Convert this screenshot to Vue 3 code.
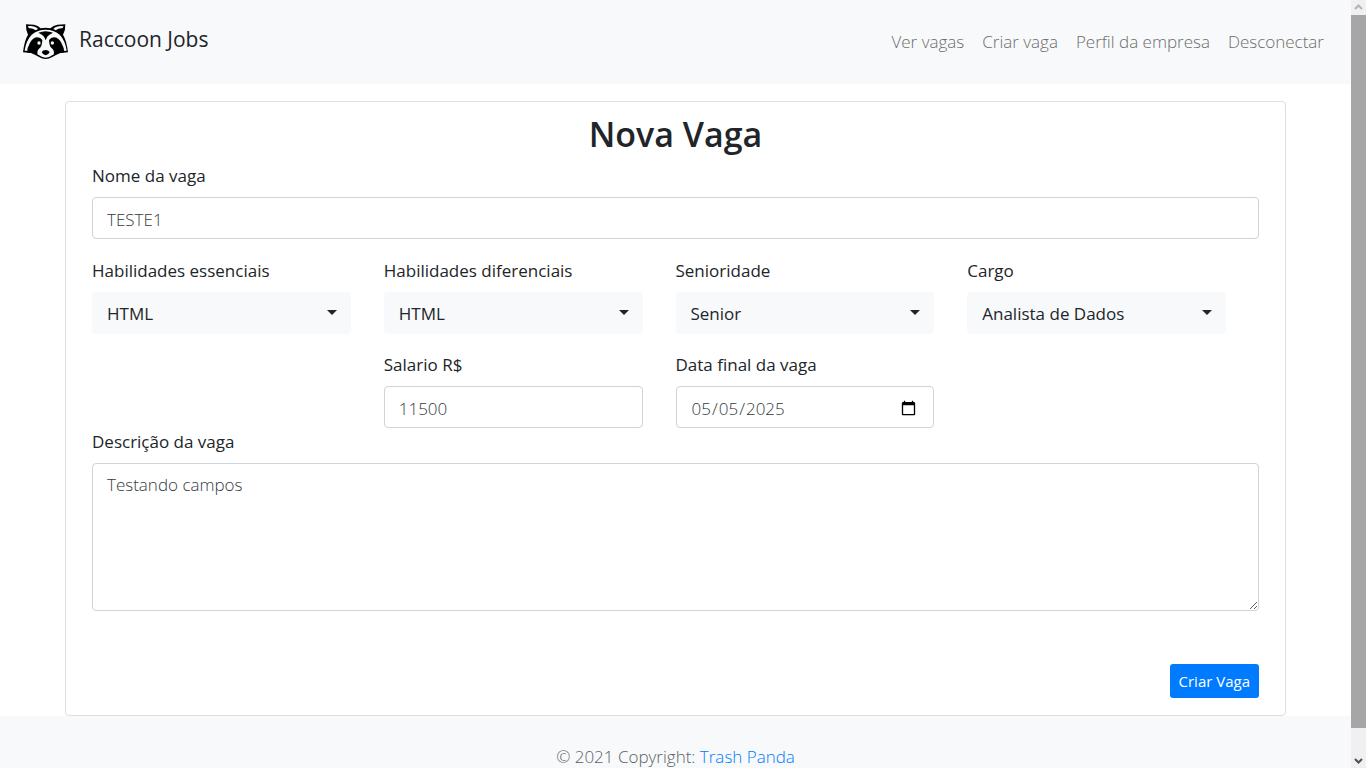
<script setup>
import { ref } from 'vue'

const links = ['Ver vagas', 'Criar vaga', 'Perfil da empresa', 'Desconectar']
const selects = ref([
  { id: 'essenciais', label: 'Habilidades essenciais', value: 'HTML', options: ['HTML', 'CSS', 'JavaScript'] },
  { id: 'diferenciais', label: 'Habilidades diferenciais', value: 'HTML', options: ['HTML', 'CSS', 'JavaScript'] },
  { id: 'senioridade', label: 'Senioridade', value: 'Senior', options: ['Junior', 'Pleno', 'Senior'] },
  { id: 'cargo', label: 'Cargo', value: 'Analista de Dados', options: ['Analista de Dados', 'Desenvolvedor'] },
])
const nome = ref('TESTE1')
const salario = ref('11500')
const data = ref('2025-05-05')
const descricao = ref('Testando campos')
</script>

<template>
  <div class="window">
    <div class="page">
      <header class="navbar">
        <a class="brand" href="#">
          <svg class="logo" viewBox="0 0 156 138" aria-hidden="true">
            <path d="M18 19 L42 20 Q54 22 62 31 Q76 27 91 31 Q100 22 112 20 L136 19 Q137 36 129 50 Q140 68 144 103 L121 105 Q107 111 97 117 Q87 123 77 123 Q67 123 57 117 Q47 111 33 105 L9 103 Q13 68 24 50 Q17 36 18 19Z" fill="#000" />
            <path d="M23 25 Q43 22 54 33 L47 37 Q36 29 27 31Z M131 25 Q111 22 100 33 L107 37 Q118 29 127 31Z" fill="#f8f9fa" />
            <path d="M14 98 Q18 68 35 50 Q53 35 77 35 Q101 35 119 50 Q136 68 140 98 L128 99 L98 111 Q87 119 77 119 Q67 119 56 111 L26 99Z" fill="#f8f9fa" />
            <path d="M67 67 Q62 58 50 58 Q38 60 30 74 Q22 88 21 103 L36 105 L53 111 Q50 98 57 92 Q66 88 67 67Z M87 67 Q92 58 104 58 Q116 60 124 74 Q132 88 133 103 L118 105 L101 111 Q104 98 97 92 Q88 88 87 67Z" fill="#000" />
            <path d="M55 44 Q77 35 99 44 Q88 49 83 55 Q79 61 77 67 Q75 61 71 55 Q66 49 55 44Z" fill="#000" />
            <circle cx="57" cy="75" r="5" fill="#f8f9fa" />
            <circle cx="97" cy="75" r="5" fill="#f8f9fa" />
            <path d="M65 102 Q69 96 77 96 Q85 96 89 102 Q87 109 77 112 Q67 109 65 102Z" fill="#000" />
          </svg>
          <span>Raccoon Jobs</span>
        </a>
        <nav class="links">
          <a v-for="link in links" :key="link" href="#">{{ link }}</a>
        </nav>
      </header>

      <main class="content">
        <form class="card" @submit.prevent>
          <h1>Nova Vaga</h1>
          <div class="field">
            <label for="nome">Nome da vaga</label>
            <input id="nome" v-model="nome" class="control" type="text">
          </div>
          <div class="grid">
            <div v-for="item in selects" :key="item.id" class="field">
              <label :for="item.id">{{ item.label }}</label>
              <div class="select">
                <select :id="item.id" v-model="item.value" class="control">
                  <option v-for="option in item.options" :key="option">{{ option }}</option>
                </select>
              </div>
            </div>
            <div class="field second">
              <label for="salario">Salario R$</label>
              <input id="salario" v-model="salario" class="control" type="text">
            </div>
            <div class="field">
              <label for="data">Data final da vaga</label>
              <input id="data" v-model="data" class="control" type="date">
            </div>
          </div>
          <div class="field">
            <label for="descricao">Descrição da vaga</label>
            <textarea id="descricao" v-model="descricao" class="control" rows="5"></textarea>
          </div>
          <div class="actions">
            <button type="submit">Criar Vaga</button>
          </div>
        </form>
      </main>

      <footer class="footer">© 2021 Copyright: <a href="#">Trash Panda</a></footer>
    </div>

    <div class="scrollbar" aria-hidden="true">
      <svg class="up" viewBox="0 0 15 15"><path d="M4 9 L7.500 5.500 L11 9" /></svg>
      <div class="thumb"></div>
      <svg viewBox="0 0 15 15"><path d="M4 6 L7.500 9.500 L11 6" /></svg>
    </div>
  </div>
</template>

<style>
body {
  margin: 0;
  background: #fff;
}
</style>

<style scoped>
.window {
  display: grid;
  grid-template-columns: 1fr 15px;
  height: 100vh;
  overflow: hidden;
  color: #212529;
  font-family: "Segoe UI", "Open Sans", "Noto Sans", sans-serif;
  font-size: 17px;
  font-weight: 400;
  line-height: 27px;
}
.window *,
.window *::after {
  box-sizing: border-box;
}
.page {
  min-width: 0;
  overflow: hidden;
}
.navbar {
  display: flex;
  justify-content: space-between;
  height: 84px;
  padding: 18px 27px 20px 20px;
  background: #f8f9fa;
}
.brand {
  display: flex;
  gap: 7px;
  color: #212529;
  font-size: 21px;
  line-height: 42px;
  text-decoration: none;
}
.logo {
  width: 52px;
  height: 46px;
}
.links {
  display: flex;
  align-items: center;
  gap: 18px;
  font-weight: 300;
}
.links a {
  color: #6c6d6d;
  text-decoration: none;
}
.content {
  padding: 17px 65px 0;
}
.card {
  padding: 12px 26px 17px;
  border: 1px solid #dfdfdf;
  border-radius: 4px;
}
h1 {
  margin: 0 0 8px;
  font-size: 34px;
  font-weight: 600;
  line-height: 40px;
  text-align: center;
}
label {
  display: block;
  margin-bottom: 8px;
}
.control {
  display: block;
  width: 100%;
  height: 42px;
  margin: 0;
  padding: 7px 14px 5px;
  border: 1px solid #ced4da;
  border-radius: 4px;
  background: #fff;
  color: #343a40;
  font: inherit;
  font-weight: 300;
}
.grid {
  display: grid;
  grid-template-columns: repeat(4, 1fr);
  row-gap: 17px;
  margin-top: 18px;
}
.grid .field {
  padding-right: 33px;
}
.second {
  grid-column: 2;
}
.select {
  position: relative;
}
.select .control {
  appearance: none;
  padding: 6px 14px;
  border-color: #f8f9fa;
  background: #f8f9fa;
  color: #212529;
  font-weight: 400;
}
.select::after {
  content: "";
  position: absolute;
  top: 18px;
  right: 14px;
  border: 5px solid transparent;
  border-top-color: #212529;
  border-bottom: 0;
  pointer-events: none;
}
textarea.control {
  height: 148px;
  resize: vertical;
}
.actions {
  display: flex;
  justify-content: flex-end;
  margin-top: 53px;
}
button {
  height: 34px;
  padding: 0 9px;
  border: 0;
  border-radius: 3px;
  background: #007bff;
  color: #fff;
  font: inherit;
  font-size: 15px;
}
.footer {
  padding: 27px 0;
  background: #f8f9fa;
  color: #5a6268;
  font-weight: 300;
  text-align: center;
}
.footer a {
  color: #007bff;
  text-decoration: none;
}
.scrollbar {
  display: flex;
  flex-direction: column;
  background: #f0f0f0;
}
.scrollbar svg {
  width: 15px;
  height: 15px;
  fill: none;
  stroke: #505050;
  stroke-width: 2;
}
.scrollbar .up {
  stroke: #b4b4b4;
}
.thumb {
  flex: 1;
  margin-bottom: 25px;
  background: #a6a6a6;
}
</style>
